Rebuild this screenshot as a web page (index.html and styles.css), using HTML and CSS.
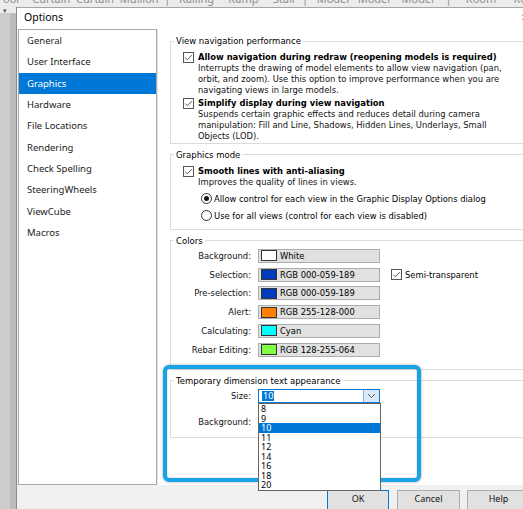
FILE: index.html
```html
<!DOCTYPE html>
<html>
<head>
<meta charset="utf-8">
<link rel="stylesheet" href="styles.css">
</head>
<body>
<div class="top"><div class="top-text">oor    Curtain  Curtain  Mullion  |   Railing     Ramp     Stair  |   Model   Model    Model    |     Room      Room</div></div>
<div class="row">
  <div class="side"><div class="side-top"><span class="caret">▾</span></div></div>
  <div class="dialog">
    <div class="title"><span>Options</span><span class="close">✕</span></div>
    <div class="body">
      <ul class="nav">
        <li>General</li>
        <li>User Interface</li>
        <li class="sel">Graphics</li>
        <li>Hardware</li>
        <li>File Locations</li>
        <li>Rendering</li>
        <li>Check Spelling</li>
        <li>SteeringWheels</li>
        <li>ViewCube</li>
        <li>Macros</li>
      </ul>
      <div class="content">
        <fieldset class="grp g1">
          <legend>View navigation performance</legend>
          <div class="opt">
            <span class="cb"><svg viewBox="0 0 11 11" width="11" height="11"><polyline points="2.2,5.6 4.4,7.8 8.8,3.2" fill="none" stroke="#444" stroke-width="0.9"/></svg></span>
            <div class="opt-text">
              <div class="lbl">Allow navigation during redraw (reopening models is required)</div>
              <div class="desc">Interrupts the drawing of model elements to allow view navigation (pan,<br>orbit, and zoom). Use this option to improve performance when you are<br>navigating views in large models.</div>
            </div>
          </div>
          <div class="opt opt2">
            <span class="cb"><svg viewBox="0 0 11 11" width="11" height="11"><polyline points="2.2,5.6 4.4,7.8 8.8,3.2" fill="none" stroke="#444" stroke-width="0.9"/></svg></span>
            <div class="opt-text">
              <div class="lbl">Simplify display during view navigation</div>
              <div class="desc">Suspends certain graphic effects and reduces detail during camera<br>manipulation: Fill and Line, Shadows, Hidden Lines, Underlays, Small<br>Objects (LOD).</div>
            </div>
          </div>
        </fieldset>

        <fieldset class="grp g2">
          <legend>Graphics mode</legend>
          <div class="opt">
            <span class="cb"><svg viewBox="0 0 11 11" width="11" height="11"><polyline points="2.2,5.6 4.4,7.8 8.8,3.2" fill="none" stroke="#444" stroke-width="0.9"/></svg></span>
            <div class="opt-text">
              <div class="lbl">Smooth lines with anti-aliasing</div>
              <div class="desc">Improves the quality of lines in views.</div>
              <div class="radio-row r1"><span class="radio on"></span><span>Allow control for each view in the Graphic Display Options dialog</span></div>
              <div class="radio-row r2"><span class="radio"></span><span>Use for all views (control for each view is disabled)</span></div>
            </div>
          </div>
        </fieldset>

        <fieldset class="grp g3">
          <legend>Colors</legend>
          <div class="crow"><span class="clbl">Background:</span><span class="cbtn"><span class="sw" style="background:#ffffff"></span>White</span></div>
          <div class="crow"><span class="clbl">Selection:</span><span class="cbtn"><span class="sw" style="background:#003bbd"></span>RGB 000-059-189</span><span class="semi"><span class="cb"><svg viewBox="0 0 11 11" width="11" height="11"><polyline points="2.2,5.6 4.4,7.8 8.8,3.2" fill="none" stroke="#444" stroke-width="0.9"/></svg></span>Semi-transparent</span></div>
          <div class="crow"><span class="clbl">Pre-selection:</span><span class="cbtn"><span class="sw" style="background:#003bbd"></span>RGB 000-059-189</span></div>
          <div class="crow"><span class="clbl">Alert:</span><span class="cbtn"><span class="sw" style="background:#ff8000"></span>RGB 255-128-000</span></div>
          <div class="crow"><span class="clbl">Calculating:</span><span class="cbtn"><span class="sw" style="background:#00ffff"></span>Cyan</span></div>
          <div class="crow"><span class="clbl">Rebar Editing:</span><span class="cbtn"><span class="sw" style="background:#80ff40"></span>RGB 128-255-064</span></div>
        </fieldset>

        <fieldset class="grp g4">
          <legend>Temporary dimension text appearance</legend>
          <div class="crow"><span class="clbl">Size:</span><span class="combo"><span class="combo-val"><span class="selv">10</span></span><span class="combo-arrow"><svg viewBox="0 0 9 6" width="9" height="6"><polyline points="1,1 4.5,4.5 8,1" fill="none" stroke="#444" stroke-width="0.9"/></svg></span></span></div>
          <div class="crow crow2"><span class="clbl">Background:</span><span class="cbtn"></span></div>
        </fieldset>
      </div>
    </div>
    <div class="buttons">
      <span class="btn ok">OK</span>
      <span class="btn">Cancel</span>
      <span class="btn">Help</span>
    </div>
  </div>
</div>
<div class="highlight"></div>
<ul class="dropdown">
  <li>8</li>
  <li>9</li>
  <li class="sel">10</li>
  <li>11</li>
  <li>12</li>
  <li>14</li>
  <li>16</li>
  <li>18</li>
  <li>20</li>
</ul>
</body>
</html>
```
FILE: styles.css
```css
* { box-sizing: border-box; }
html, body { margin: 0; padding: 0; }
body {
  width: 523px;
  height: 509px;
  overflow: hidden;
  position: relative;
  background: #c4c4c4;
  font-family: "DejaVu Sans", Verdana, sans-serif;
  color: #000;
}

.top {
  height: 7px;
  background: #ececec;
  overflow: hidden;
}
.top-text {
  margin-top: -8px;
  padding-left: 3px;
  font-family: "Noto Sans", sans-serif;
  font-size: 11px;
  line-height: 14px;
  color: #8e8e8e;
  white-space: pre;
}

.row { display: flex; height: 502px; }

.side {
  width: 17px;
  flex: none;
  background: linear-gradient(to right, #cdcdcd 0, #cdcdcd 10px, #bcbcbc 10px);
  border-right: 1px solid #8a8a8a;
}
.side-top {
  height: 6px;
  background: #ececec;
}
.caret {
  display: block;
  font-size: 7px;
  line-height: 7px;
  color: #555;
  padding-left: 3px;
  padding-top: 1px;
}

.dialog {
  flex: 1;
  min-width: 0;
  display: flex;
  flex-direction: column;
  background: #f0f0f0;
  border-top: 1px solid #a5a5a5;
}

.title {
  height: 21px;
  flex: none;
  background: #fff;
  display: flex;
  align-items: center;
  padding: 0 0 3px 7px;
  font-family: "Noto Sans", sans-serif;
  font-size: 10.5px;
  color: #000;
}
.close { margin-left: auto; margin-right: -6px; font-size: 10px; color: #333; }

.body { display: flex; height: 456px; flex: none; padding-left: 1px; }

.nav {
  width: 139px;
  flex: none;
  margin: 0;
  padding: 0;
  list-style: none;
  background: #fff;
  border: 1px solid #a9a9a9;
  font-family: "Noto Sans", sans-serif;
  font-size: 9.5px;
  color: #222;
}
.nav li {
  height: 21.33px;
  line-height: 21.33px;
  padding-left: 8px;
}
.nav li.sel { background: #0078d7; color: #fff; }

.content {
  flex: 1;
  min-width: 0;
  background: #fff;
  overflow: hidden;
  padding: 7px 0 0 12px;
  border-left: 1px solid #e6e6e6;
}

.grp {
  width: 420px;
  min-width: 0;
  margin: 0;
  border: 1px solid #dcdcdc;
  padding: 0;
}
.grp legend {
  padding: 0 2px;
  margin-left: 3px;
  font-size: 8.5px;
  line-height: 10px;
  color: #000;
}

.g1 { padding-top: 6px; padding-bottom: 1px; }
.g2 { margin-top: 6px; padding-top: 6.5px; padding-bottom: 7px; }
.g3 { margin-top: 6px; padding-top: 3px; padding-bottom: 12px; }
.g4 { margin-top: 6px; padding-top: 3px; padding-bottom: 8px; }

.opt { display: flex; gap: 4px; align-items: flex-start; margin-left: 12px; }
.opt2 { margin-top: 3px; }
.cb {
  width: 11px;
  height: 11px;
  flex: none;
  border: 1px solid #555;
  background: #fff;
  display: inline-flex;
}
.cb svg { display: block; margin: -1px; }

.lbl {
  font-weight: bold;
  font-size: 8.4px;
  line-height: 11px;
  white-space: nowrap;
}
.desc {
  font-size: 8.4px;
  line-height: 10.8px;
  white-space: nowrap;
  color: #111;
}

.radio-row {
  display: flex;
  align-items: center;
  gap: 2px;
  margin-left: 3px;
  font-size: 8.4px;
  line-height: 12px;
  height: 12px;
  white-space: nowrap;
}
.radio-row.r1 { margin-top: 4.7px; }
.radio-row.r2 { margin-top: 5px; }
.radio {
  width: 11px;
  height: 11px;
  border: 1px solid #333;
  border-radius: 50%;
  background: #fff;
  flex: none;
  display: flex;
  align-items: center;
  justify-content: center;
}
.radio.on::after {
  content: "";
  width: 5px;
  height: 5px;
  border-radius: 50%;
  background: #111;
}

.crow {
  display: flex;
  align-items: center;
  height: 14px;
  margin-top: 4.8px;
  font-size: 8.4px;
  white-space: nowrap;
}
.crow:first-of-type { margin-top: 0; }
.g4 .crow2 { margin-top: 12px; }
.clbl {
  width: 87px;
  flex: none;
  text-align: right;
  padding-right: 7px;
  color: #111;
}
.cbtn {
  width: 122px;
  height: 14px;
  flex: none;
  display: flex;
  align-items: center;
  gap: 3px;
  padding-left: 2px;
  background: #e1e1e1;
  border: 1px solid #adadad;
}
.sw {
  width: 16px;
  height: 11px;
  flex: none;
  border: 1px solid #333;
}
.semi {
  display: flex;
  align-items: center;
  gap: 3px;
  margin-left: 11px;
}

.combo {
  width: 122px;
  height: 14px;
  flex: none;
  display: flex;
  border: 1px solid #0078d7;
  background: #fff;
}
.combo-val {
  flex: 1;
  display: flex;
  align-items: center;
  padding-left: 3px;
  font-family: "Noto Sans", sans-serif;
  font-size: 9px;
}
.selv { background: #0078d7; color: #fff; line-height: 10px; padding: 0 1px; }
.combo-arrow {
  width: 16px;
  flex: none;
  background: #dbe9f7;
  border-left: 1px solid #7eb4ea;
  display: flex;
  align-items: center;
  justify-content: center;
}
.combo-arrow svg { display: block; }

.buttons {
  flex: 1;
  display: flex;
  gap: 8px;
  padding: 5px 0 0 310px;
  overflow: hidden;
}
.btn {
  flex: none;
  width: 62px;
  height: 21px;
  background: #e1e1e1;
  border: 1px solid #adadad;
  font-family: "Noto Sans", sans-serif;
  font-size: 9px;
  line-height: 15px;
  text-align: center;
  color: #111;
}
.btn.ok { border-color: #0078d7; }
.btn + .btn { width: 63px; }
.btn:last-child { margin-left: -1px; }

.highlight {
  position: absolute;
  left: 163px;
  top: 365px;
  width: 258px;
  height: 117px;
  border: 4px solid #17a3e6;
  border-radius: 6px;
  box-shadow: 0 0 3px rgba(0, 0, 0, 0.35), inset 0 0 2px rgba(0, 0, 0, 0.25);
}

.dropdown {
  position: absolute;
  left: 258px;
  top: 403px;
  width: 123px;
  margin: 0;
  padding: 0;
  list-style: none;
  background: #fff;
  border: 1px solid #646464;
  font-family: "Noto Sans", sans-serif;
  font-size: 9px;
  color: #000;
}
.dropdown li {
  height: 9.5px;
  line-height: 9.5px;
  padding-left: 2px;
}
.dropdown li.sel { background: #0078d7; color: #fff; }
```
